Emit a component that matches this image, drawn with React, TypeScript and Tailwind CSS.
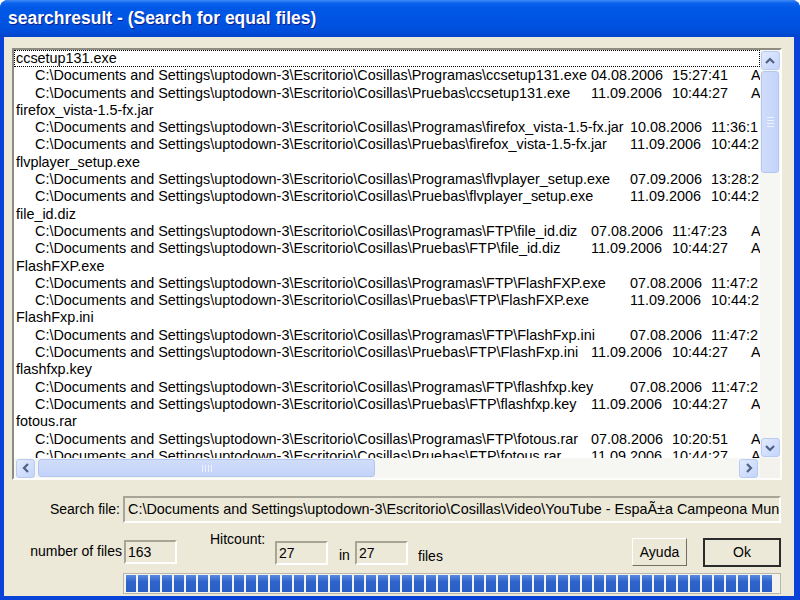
import React from 'react'

type Entry = { path: string; date: string; time: string; wide?: boolean }
type Group = { name: string; entries: Entry[] }

const base = 'C:\\Documents and Settings\\uptodown-3\\Escritorio\\Cosillas\\'

const groups: Group[] = [
  {
    name: 'ccsetup131.exe',
    entries: [
      { path: base + 'Programas\\ccsetup131.exe', date: '04.08.2006', time: '15:27:41' },
      { path: base + 'Pruebas\\ccsetup131.exe', date: '11.09.2006', time: '10:44:27' },
    ],
  },
  {
    name: 'firefox_vista-1.5-fx.jar',
    entries: [
      { path: base + 'Programas\\firefox_vista-1.5-fx.jar', date: '10.08.2006', time: '11:36:14', wide: true },
      { path: base + 'Pruebas\\firefox_vista-1.5-fx.jar', date: '11.09.2006', time: '10:44:27', wide: true },
    ],
  },
  {
    name: 'flvplayer_setup.exe',
    entries: [
      { path: base + 'Programas\\flvplayer_setup.exe', date: '07.09.2006', time: '13:28:22', wide: true },
      { path: base + 'Pruebas\\flvplayer_setup.exe', date: '11.09.2006', time: '10:44:27', wide: true },
    ],
  },
  {
    name: 'file_id.diz',
    entries: [
      { path: base + 'Programas\\FTP\\file_id.diz', date: '07.08.2006', time: '11:47:23' },
      { path: base + 'Pruebas\\FTP\\file_id.diz', date: '11.09.2006', time: '10:44:27' },
    ],
  },
  {
    name: 'FlashFXP.exe',
    entries: [
      { path: base + 'Programas\\FTP\\FlashFXP.exe', date: '07.08.2006', time: '11:47:23', wide: true },
      { path: base + 'Pruebas\\FTP\\FlashFXP.exe', date: '11.09.2006', time: '10:44:27', wide: true },
    ],
  },
  {
    name: 'FlashFxp.ini',
    entries: [
      { path: base + 'Programas\\FTP\\FlashFxp.ini', date: '07.08.2006', time: '11:47:23', wide: true },
      { path: base + 'Pruebas\\FTP\\FlashFxp.ini', date: '11.09.2006', time: '10:44:27' },
    ],
  },
  {
    name: 'flashfxp.key',
    entries: [
      { path: base + 'Programas\\FTP\\flashfxp.key', date: '07.08.2006', time: '11:47:23', wide: true },
      { path: base + 'Pruebas\\FTP\\flashfxp.key', date: '11.09.2006', time: '10:44:27' },
    ],
  },
  {
    name: 'fotous.rar',
    entries: [
      { path: base + 'Programas\\FTP\\fotous.rar', date: '07.08.2006', time: '10:20:51' },
      { path: base + 'Pruebas\\FTP\\fotous.rar', date: '11.09.2006', time: '10:44:27' },
    ],
  },
]

function Arrow({ dir }: { dir: 'up' | 'down' | 'left' | 'right' }) {
  const pts = {
    up: '4,10 8,6 12,10',
    down: '4,6 8,10 12,6',
    left: '10,4 6,8 10,12',
    right: '6,4 10,8 6,12',
  }[dir]
  return (
    <svg width="16" height="16" viewBox="0 0 16 16">
      <polyline points={pts} fill="none" stroke="#4d6185" strokeWidth="2.2" />
    </svg>
  )
}

function ScrollButton({ dir }: { dir: 'up' | 'down' | 'left' | 'right' }) {
  return (
    <div className="w-[19px] h-[19px] shrink-0 rounded-[3px] border border-[#b9cbf3] bg-[linear-gradient(135deg,#e2eafe,#c3d4fb)] flex items-center justify-center">
      <Arrow dir={dir} />
    </div>
  )
}

const sunken = 'border-2 border-t-[#a7a597] border-l-[#a7a597] border-b-[#ffffff] border-r-[#ffffff]'

export default function App() {
  const segments = Array.from({ length: 54 })
  return (
    <div className="w-[800px] h-[600px] flex flex-col bg-[#0842d6] rounded-t-[8px] overflow-hidden font-['Liberation_Sans',Arial,sans-serif] text-black">
      {/* Title bar */}
      <div className="h-[37px] shrink-0 flex items-center px-[8px] bg-[linear-gradient(to_bottom,#3d8bf5_0%,#0a62ee_9%,#0058e6_22%,#0054e3_55%,#004fdc_82%,#0044cc_100%)]">
        <span className="text-white font-bold text-[17.5px] [text-shadow:1px_1px_0_#0a1e8a]">
          searchresult - (Search for equal files)
        </span>
      </div>

      {/* Client area */}
      <div className="flex-1 ml-[4px] mr-[6px] mb-[4px] bg-[#ece9d8] flex flex-col">
        {/* List box */}
        <div className="ml-[8px] mr-[12px] mt-[11px] h-[432px] border-2 border-t-[#8e8c80] border-l-[#8e8c80] border-b-[#fdfdfb] border-r-[#fdfdfb] bg-white flex flex-col overflow-hidden">
          <div className="flex flex-1 min-h-0">
            <div className="flex-1 min-w-0 overflow-hidden text-[14.4px] whitespace-nowrap">
              {groups.map((g, gi) => (
                <React.Fragment key={g.name}>
                  <div
                    className={
                      gi === 0
                        ? 'h-[17.3px] leading-[15px] border border-dotted border-black pl-[1px]'
                        : 'h-[17.3px] leading-[17.3px] pl-[2px]'
                    }
                  >
                    {g.name}
                  </div>
                  {g.entries.map((e) => (
                    <div key={e.path} className="h-[17.3px] leading-[17.3px] pl-[21px] flex">
                      <span className={e.wide ? 'w-[595px] shrink-0' : 'w-[556px] shrink-0'}>{e.path}</span>
                      <span className="w-[81px] shrink-0">{e.date}</span>
                      <span className="w-[79px] shrink-0">{e.wide ? e.time.slice(0, 7) : e.time}</span>
                      {!e.wide && <span className="shrink-0">A</span>}
                    </div>
                  ))}
                </React.Fragment>
              ))}
            </div>
            {/* Vertical scrollbar */}
            <div className="w-[20px] shrink-0 bg-[#f6f6f2] flex flex-col items-center pt-[1px] pb-[1px]">
              <ScrollButton dir="up" />
              <div className="mt-[1px] w-[18px] h-[102px] rounded-[3px] border border-[#b3c6f0] bg-[linear-gradient(to_right,#d0dcfa,#c3d3fa)] flex flex-col items-center justify-center gap-[2px]">
                <div className="w-[7px] h-[1px] bg-[#eef3ff]" />
                <div className="w-[7px] h-[1px] bg-[#eef3ff]" />
                <div className="w-[7px] h-[1px] bg-[#eef3ff]" />
                <div className="w-[7px] h-[1px] bg-[#eef3ff]" />
              </div>
              <div className="flex-1" />
              <ScrollButton dir="down" />
            </div>
          </div>
          {/* Horizontal scrollbar */}
          <div className="h-[20px] shrink-0 flex">
            <div className="flex-1 bg-[#f6f6f2] flex items-center pl-[2px] pr-[2px]">
              <ScrollButton dir="left" />
              <div className="ml-[3px] w-[337px] h-[18px] rounded-[3px] border border-[#b3c6f0] bg-[linear-gradient(to_bottom,#d0dcfa,#c3d3fa)] flex items-center justify-center gap-[2px]">
                <div className="w-[1px] h-[7px] bg-[#eef3ff]" />
                <div className="w-[1px] h-[7px] bg-[#eef3ff]" />
                <div className="w-[1px] h-[7px] bg-[#eef3ff]" />
                <div className="w-[1px] h-[7px] bg-[#eef3ff]" />
              </div>
              <div className="flex-1" />
              <ScrollButton dir="right" />
            </div>
            <div className="w-[20px] bg-[#f3f2ec]" />
          </div>
        </div>

        {/* Search file row */}
        <div className="mt-[16px] flex items-center text-[14px]">
          <span className="w-[117px] text-right pr-[1px]">Search file:</span>
          <div className={`ml-[2px] w-[658px] h-[27px] ${sunken} bg-[#ece9d8] flex items-center pl-[3px] overflow-hidden whitespace-nowrap text-[14.4px]`}>
            {base}Video\YouTube - EspaÃ±a Campeona Mun
          </div>
        </div>

        {/* Counters row */}
        <div className="mt-[8px] h-[36px] flex items-start text-[14px]">
          <span className="w-[118px] text-right mt-[12px] leading-[17px]">number of files</span>
          <div className={`ml-[2px] mt-[9px] w-[53px] h-[24px] ${sunken} flex items-center pl-[2px]`}>163</div>
          <span className="ml-[33px] w-[65px] leading-[17px]">Hitcount:</span>
          <div className={`mt-[10px] w-[53px] h-[24px] ${sunken} flex items-center pl-[2px]`}>27</div>
          <span className="ml-[11px] w-[16px] mt-[16px] leading-[17px]">in</span>
          <div className={`mt-[10px] w-[53px] h-[24px] ${sunken} flex items-center pl-[2px]`}>27</div>
          <span className="ml-[10px] mt-[17px] leading-[17px]">files</span>
          <div className="flex-1" />
          <button className="mt-[7px] w-[55px] h-[28px] border border-t-[#ffffff] border-l-[#ffffff] border-b-[#716f64] border-r-[#716f64] bg-[#ece9d8] text-[14px]">
            Ayuda
          </button>
          <button className="ml-[16px] mr-[13px] mt-[7px] w-[78px] h-[29px] border-2 border-[#2b2b2b] bg-[#ece9d8] text-[14px]">
            Ok
          </button>
        </div>

        {/* Progress bar */}
        <div className="mt-[6px] ml-[119px] w-[658px] h-[21px] border border-[#b8b7ae] bg-[#f3f2ec] flex items-center gap-[2px] px-[2px] overflow-hidden">
          {segments.map((_, i) => (
            <div key={i} className="w-[10px] h-[17px] shrink-0 bg-[linear-gradient(to_bottom,#5a8ae0,#2d63cc_40%,#2a5fc6)]" />
          ))}
        </div>
      </div>
    </div>
  )
}
